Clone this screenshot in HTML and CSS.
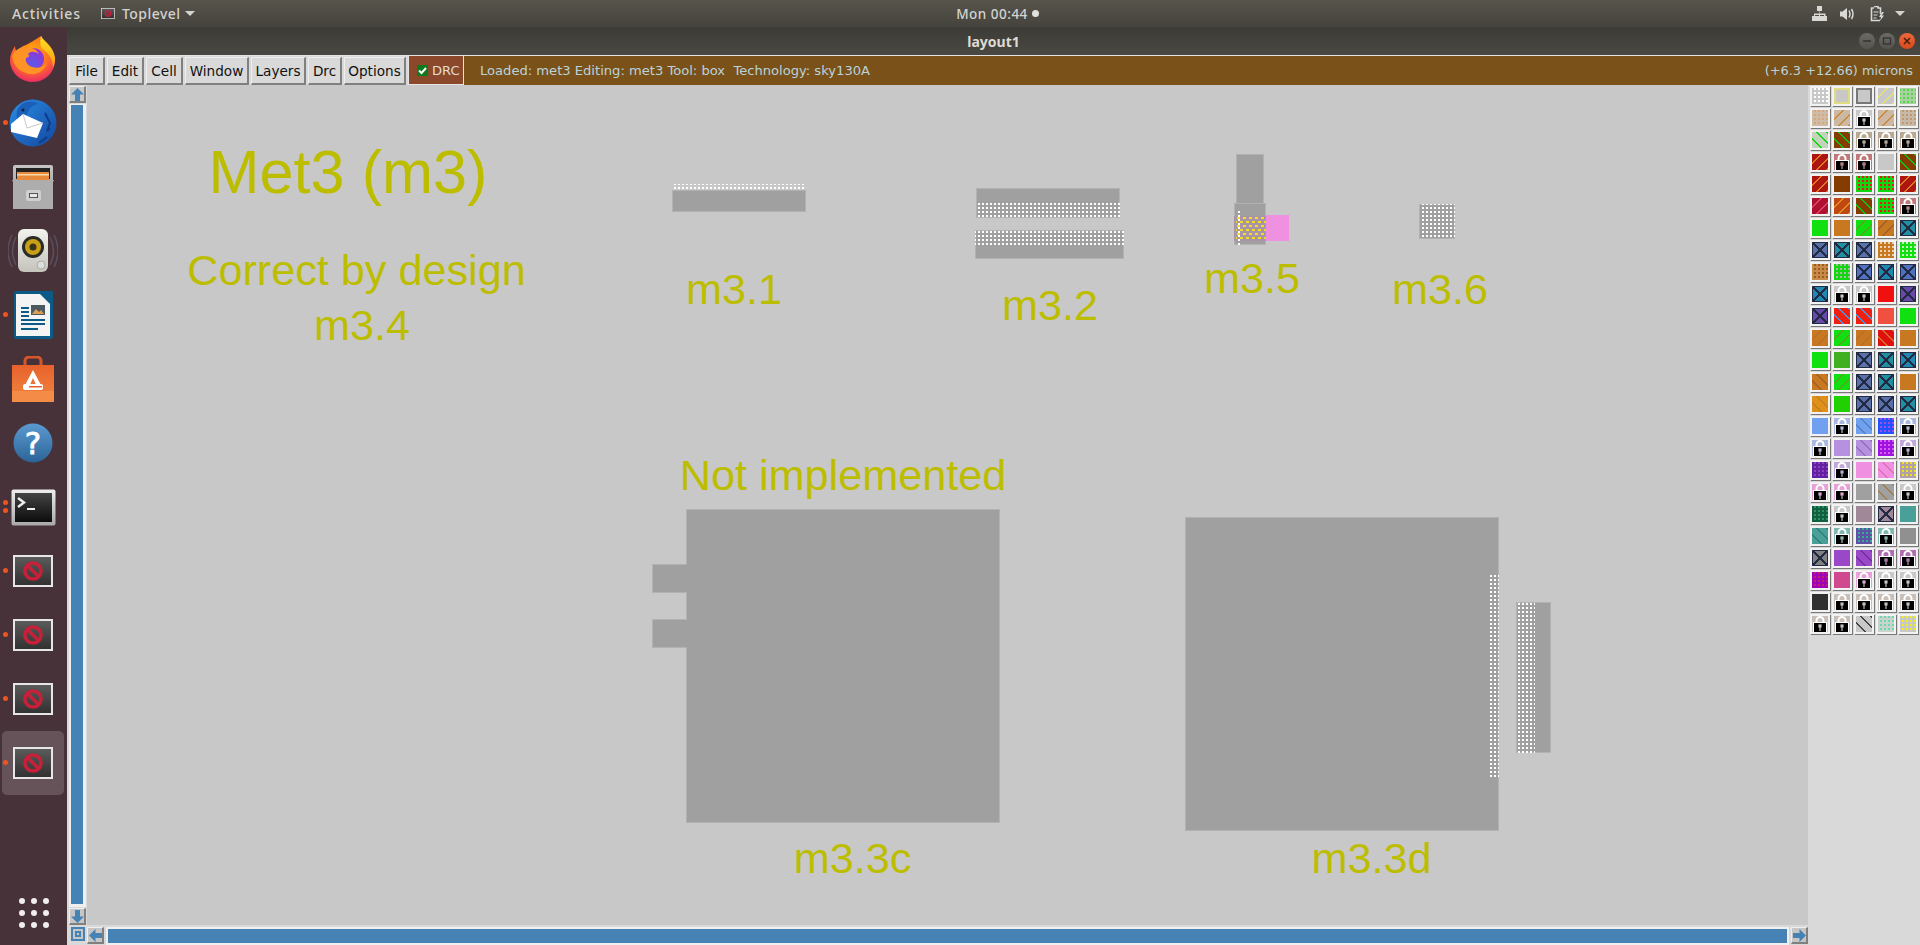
FILE: index.html
```html
<!DOCTYPE html>
<html lang="en">
<head>
<meta charset="utf-8">
<title>layout1</title>
<link rel="stylesheet" href="styles.css">
</head>
<body>
<svg class="defs" width="0" height="0" aria-hidden="true">
  <defs>
    <linearGradient id="noBg" x1="0" y1="0" x2="0" y2="1"><stop offset="0" stop-color="#5c5c5c"/><stop offset="1" stop-color="#303030"/></linearGradient>
    <radialGradient id="ffBody" cx=".5" cy=".35" r=".75"><stop offset="0" stop-color="#ffb000"/><stop offset=".55" stop-color="#ff6a2a"/><stop offset="1" stop-color="#e3127f"/></radialGradient>
    <linearGradient id="ffFlame" x1="0" y1="0" x2="0" y2="1"><stop offset="0" stop-color="#ffe226"/><stop offset="1" stop-color="#ff9a10"/></linearGradient>
    <radialGradient id="ffGlobe" cx=".5" cy=".7" r=".7"><stop offset="0" stop-color="#5a5ae6"/><stop offset="1" stop-color="#a02ed8"/></radialGradient>
    <linearGradient id="tbBlue" x1="0" y1="0" x2="1" y2="1"><stop offset="0" stop-color="#2a8fe8"/><stop offset="1" stop-color="#14459c"/></linearGradient>
    <linearGradient id="cab" x1="0" y1="0" x2="0" y2="1"><stop offset="0" stop-color="#c4c4c4"/><stop offset="1" stop-color="#8e8e8e"/></linearGradient>
    <linearGradient id="spk" x1="0" y1="0" x2="0" y2="1"><stop offset="0" stop-color="#f2f2ee"/><stop offset="1" stop-color="#c4c4bc"/></linearGradient>
    <linearGradient id="bag" x1="0" y1="0" x2="0" y2="1"><stop offset="0" stop-color="#e8622c"/><stop offset="1" stop-color="#f08540"/></linearGradient>
    <linearGradient id="hlp" x1="0" y1="0" x2="0" y2="1"><stop offset="0" stop-color="#5a9ad0"/><stop offset="1" stop-color="#2c6498"/></linearGradient>
    <linearGradient id="term" x1="0" y1="0" x2="0" y2="1"><stop offset="0" stop-color="#444"/><stop offset="1" stop-color="#0c0c0c"/></linearGradient>
    <linearGradient id="termFrame" x1="0" y1="0" x2="0" y2="1"><stop offset="0" stop-color="#eee"/><stop offset="1" stop-color="#a8a8a8"/></linearGradient>
    <symbol id="noWin" viewBox="0 0 40 32">
      <rect x="1" y="1" width="38" height="30" fill="url(#noBg)" stroke="#e6e6e6" stroke-width="2"/>
      <circle cx="20" cy="16" r="8" fill="none" stroke="#c8203a" stroke-width="3.600"/>
      <path d="M14.500 10.500l11 11" stroke="#c8203a" stroke-width="3.400"/>
    </symbol>
    <symbol id="arrow" viewBox="0 0 13 13">
      <path d="M6.500 0L13 6.500H9V13H4V6.500H0z" fill="#4682b4"/>
    </symbol>
  </defs>
</svg>

<header class="topbar">
  <div class="top-left">
    <span class="top-item activities">Activities</span>
    <span class="top-item app">
      <svg class="app-ico" width="14" height="11"><use href="#noWin"/></svg>
      Toplevel
      <span class="caret"></span>
    </span>
  </div>
  <div class="clock">Mon 00:44<span class="clock-dot"></span></div>
  <div class="tray">
    <svg width="15" height="15" viewBox="0 0 15 15"><path d="M5 0h5v5H8v2.500h5.500V10H15v5h-5v-5h2V9H8v1h2v5H5v-5h2V9H3v1h2v5H0v-5h2V7.500h5.500V5H5z" fill="#d8d8d4"/></svg>
    <svg class="tray-vol" width="15" height="14" viewBox="0 0 15 14"><path d="M0 4.500h2.500L7 1v12L2.500 9.500H0z" fill="#d8d8d4"/><path d="M9 3.500q2 3.500 0 7M11.500 2q3 5 0 10" fill="none" stroke="#d8d8d4" stroke-width="1.500"/></svg>
    <svg class="tray-bat" width="15" height="16" viewBox="0 0 15 16"><path d="M4 .5h4V2h2.500v6M10 14.500H1.500V2H4" fill="none" stroke="#d8d8d4" stroke-width="1.600"/><path d="M3.500 6h5M3.500 9h4M3.500 12h3" stroke="#d8d8d4" stroke-width="1.200"/><path d="M12 6l-3 5h2l-1 4 4-5.500h-2.200L14 6z" fill="#d8d8d4"/></svg>
    <span class="caret"></span>
  </div>
</header>

<div class="desktop">
  <nav class="dock">
    <div class="dock-item">
      <svg width="46" height="48" viewBox="0 0 46 48">
        <path d="M31 1c3 6 12 9 14 22 1 13-9 24-22 24C10 47 0 37 0 25c0-5 2-9 5-14 0 3 1 5 2 6 2-4 5-6 9-7 4-2 9-5 15-9z" fill="url(#ffBody)"/>
        <path d="M31 1c3 6 12 9 14 22 0 4-1 7-2 10 0-9-5-16-12-20-1-4-1-8 0-12z" fill="url(#ffFlame)"/>
        <circle cx="23" cy="24" r="11" fill="url(#ffGlobe)"/>
        <path d="M2 21c3-6 8-9 14-9 7 0 11 3 13 7-4-3-9-3-11 0 2 2 1 3-2 4-1 3 1 7 6 9 6 2 12 0 15-4-2 7-9 12-17 11C11 38 3 31 2 21z" fill="#ff9326"/>
      </svg>
    </div>
    <div class="dock-item running">
      <svg width="48" height="48" viewBox="0 0 48 48">
        <circle cx="24" cy="24" r="23.500" fill="url(#tbBlue)"/>
        <path d="M10 8c5-6 14-7 19-3-6 1-10 6-11 11l-9 6C7 17 7 12 10 8z" fill="#1c5fb8"/>
        <circle cx="14" cy="11" r="1.500" fill="#0b2040"/>
        <path d="M2 25L14 15l20 9-6 15-26-6z" fill="#fff"/>
        <path d="M14 15l4 14 16-5" fill="none" stroke="#c8c8d0" stroke-width="1"/>
        <path d="M36 14l5 10-3 8 3-3M30 44l8-6" stroke="#0e3c8a" stroke-width="2" fill="none"/>
      </svg>
    </div>
    <div class="dock-item">
      <svg width="42" height="44" viewBox="0 0 42 44">
        <rect x="1" y="0" width="40" height="44" rx="2" fill="url(#cab)"/>
        <rect x="4" y="3" width="34" height="11" fill="#222"/>
        <rect x="5" y="7" width="32" height="8" fill="#e88a3c"/>
        <rect x="5" y="9" width="32" height="1.500" fill="#f8d8a8"/>
        <path d="M0 15h42l-1 2v27H1V17z" fill="#adadad"/>
        <rect x="14" y="25" width="15" height="11" rx="2" fill="#cfcfcf"/>
        <rect x="17" y="28" width="9" height="5" fill="#555"/>
        <rect x="18" y="29" width="7" height="3" fill="#e8e8e8"/>
      </svg>
    </div>
    <div class="dock-item">
      <svg width="50" height="44" viewBox="0 0 50 44">
        <g fill="none" stroke="#7f8aa0" stroke-opacity=".35" stroke-width="1.500">
          <path d="M8 8q-7 14 0 28M42 8q7 14 0 28"/><path d="M4 6q-8 16 0 32M46 6q8 16 0 32"/>
        </g>
        <rect x="10" y="0" width="30" height="43" rx="6" fill="url(#spk)"/>
        <circle cx="25" cy="18" r="11" fill="#2a2a26"/>
        <circle cx="25" cy="18" r="8" fill="#c8a018"/>
        <circle cx="25" cy="18" r="3.500" fill="#3a3418"/>
        <circle cx="33" cy="36" r="4" fill="#ddd" stroke="#aaa"/>
      </svg>
    </div>
    <div class="dock-item running">
      <svg width="40" height="48" viewBox="0 0 40 48">
        <path d="M1 2a2 2 0 0 1 2-2h26l11 11v35a2 2 0 0 1-2 2H3a2 2 0 0 1-2-2z" fill="#0c5a86"/>
        <path d="M3 3h24l10 10v32H3z" fill="#f4f4f4"/>
        <path d="M28 0h12v12z" fill="#0c5a86"/>
        <path d="M8 17h8M8 21h8M8 25h8M8 29h24M8 33h24M8 38h17" stroke="#0c5a86" stroke-width="1.800"/>
        <rect x="18" y="14" width="14" height="10" fill="#4a5a60"/>
        <path d="M19 23l4-5 3 3 2-2 3 4z" fill="#d8a050"/>
      </svg>
    </div>
    <div class="dock-item">
      <svg width="42" height="46" viewBox="0 0 42 46">
        <path d="M13 11V5a4 4 0 0 1 4-4h8a4 4 0 0 1 4 4v6" fill="none" stroke="#d8552a" stroke-width="3"/>
        <rect x="0" y="9" width="42" height="37" fill="url(#bag)"/>
        <rect x="0" y="35" width="42" height="11" fill="#f48c48"/>
        <path d="M21 14l9 17h-5l-4-9-4 9h-5z" fill="#fff"/>
        <rect x="11" y="28" width="20" height="6" rx="2" fill="#fff"/>
        <rect x="17" y="30" width="13" height="1.500" fill="#e8622c"/>
      </svg>
    </div>
    <div class="dock-item">
      <svg width="40" height="40" viewBox="0 0 40 40">
        <circle cx="20" cy="20" r="19.500" fill="url(#hlp)"/>
        <text x="20" y="31" class="help-mark">?</text>
      </svg>
    </div>
    <div class="dock-item running-two">
      <svg width="45" height="37" viewBox="0 0 45 37">
        <rect x=".5" y=".5" width="44" height="36" rx="2" fill="url(#termFrame)"/>
        <rect x="4" y="4" width="37" height="29" fill="url(#term)"/>
        <path d="M7 9l6 4.500-6 4.500" fill="none" stroke="#eee" stroke-width="2.400"/>
        <path d="M16 20h8" stroke="#eee" stroke-width="2"/>
      </svg>
    </div>
    <div class="dock-item running"><svg width="40" height="32"><use href="#noWin"/></svg></div>
    <div class="dock-item running"><svg width="40" height="32"><use href="#noWin"/></svg></div>
    <div class="dock-item running"><svg width="40" height="32"><use href="#noWin"/></svg></div>
    <div class="dock-item running active"><svg width="40" height="32"><use href="#noWin"/></svg></div>
    <div class="apps-grid">
      <span></span><span></span><span></span>
      <span></span><span></span><span></span>
      <span></span><span></span><span></span>
    </div>
  </nav>

  <main class="window">
    <div class="titlebar">
      <span class="title">layout1</span>
      <div class="win-buttons">
        <span class="wb"><svg width="10" height="10" viewBox="0 0 10 10"><path d="M1 5h8" stroke="#333" stroke-width="1.500"/></svg></span>
        <span class="wb"><svg width="10" height="10" viewBox="0 0 10 10"><rect x="1.500" y="2" width="7" height="6" fill="none" stroke="#333" stroke-width="1.300"/></svg></span>
        <span class="wb wb-close"><svg width="10" height="10" viewBox="0 0 10 10"><path d="M2 2l6 6M8 2l-6 6" stroke="#40200f" stroke-width="1.500"/></svg></span>
      </div>
    </div>

    <div class="menubar">
      <button class="menu mb-file">File</button>
      <button class="menu mb-edit">Edit</button>
      <button class="menu mb-cell">Cell</button>
      <button class="menu mb-window">Window</button>
      <button class="menu mb-layers">Layers</button>
      <button class="menu mb-drc">Drc</button>
      <button class="menu mb-options">Options</button>
      <div class="drc-toggle">
        <svg width="11" height="11" viewBox="0 0 11 11"><rect width="11" height="11" fill="#0f7a1c"/><path d="M2 5.500l2.500 2.500L9 3" fill="none" stroke="#fff" stroke-width="2"/></svg>
        DRC
      </div>
      <div class="status">
        <span class="status-left">Loaded: met3 Editing: met3 Tool: box&nbsp; Technology: sky130A</span>
        <span>(+6.3 +12.66) microns</span>
      </div>
    </div>

    <div class="workarea">
      <div class="vbar">
        <div class="sb-btn"><svg width="13" height="13"><use href="#arrow"/></svg></div>
        <div class="v-thumb"></div>
        <div class="sb-btn"><svg class="rot180" width="13" height="13"><use href="#arrow"/></svg></div>
      </div>

      <div class="canvas">
        <svg width="1721" height="840" viewBox="87 85 1721 840">
          <defs>
            <pattern id="cut" x="2" y="3" width="4" height="4" patternUnits="userSpaceOnUse"><rect width="2" height="2" fill="#fff"/></pattern>
            <pattern id="via" x="1" y="1" width="6" height="8" patternUnits="userSpaceOnUse"><rect width="3" height="2" fill="#f0e020"/><rect x="3" y="4" width="3" height="2" fill="#f0e020"/></pattern>
          </defs>

          <text class="lbl lbl-big" x="348" y="192.500">Met3 (m3)</text>
          <text class="lbl" x="356.500" y="285">Correct by design</text>
          <text class="lbl" x="362" y="340">m3.4</text>
          <text class="lbl" x="734" y="303.500">m3.1</text>
          <text class="lbl" x="1050" y="320">m3.2</text>
          <text class="lbl" x="1252" y="292.500">m3.5</text>
          <text class="lbl" x="1440" y="304">m3.6</text>
          <text class="lbl" x="843" y="489.500">Not implemented</text>
          <text class="lbl" x="852.500" y="873">m3.3c</text>
          <text class="lbl" x="1371.500" y="873">m3.3d</text>

          <g class="crisp">
            <rect class="geo" x="672.500" y="190.500" width="133" height="21"/>
            <rect class="cut" x="674" y="184" width="130" height="6"/>

            <rect class="geo" x="976.500" y="188.500" width="143" height="29"/>
            <rect class="cut" x="978" y="203" width="142" height="15"/>
            <rect class="geo" x="975.500" y="230.500" width="148" height="28"/>
            <rect class="cut" x="975" y="230" width="149" height="15"/>

            <rect class="pink" x="1234" y="215" width="55" height="26"/>
            <rect class="geo" x="1236.500" y="154.500" width="27" height="50"/>
            <rect class="geo" x="1234.500" y="203.500" width="31" height="41"/>
            <rect class="overlap" x="1234" y="216" width="32" height="25"/>
            <rect class="via" x="1236" y="217" width="30" height="24"/>
            <rect class="cut" x="1238" y="211" width="2" height="34"/>

            <rect class="geo" x="1419.500" y="204.500" width="35" height="34"/>
            <rect class="cut" x="1420" y="204" width="35" height="35"/>

            <path class="geo" d="M686.500 509.500H999.500V822.500H686.500V647.500H652.500V619.500H686.500V592.500H652.500V564.500H686.500Z"/>

            <rect class="geo" x="1185.500" y="517.500" width="313" height="313"/>
            <rect class="cut" x="1490" y="575" width="9" height="204"/>
            <rect class="geo" x="1516.500" y="602.500" width="34" height="150"/>
            <rect class="cut" x="1517" y="603" width="18" height="150"/>
          </g>
        </svg>
      </div>

      <aside class="layers">
        <span class="t d c01"></span><span class="t ybox"></span><span class="t dbox"></span><span class="t fw c02"></span><span class="t d c03"></span>
        <span class="t d c04"></span><span class="t fw c05"></span><span class="t lk c06"></span><span class="t fw c05"></span><span class="t d c07"></span>
        <span class="t bk c08"></span><span class="t bk c09"></span><span class="t lk c10"></span><span class="t lk c10"></span><span class="t lk c10"></span>
        <span class="t fw c11"></span><span class="t lk c12"></span><span class="t lk c12"></span><span class="t c13"></span><span class="t bk c09"></span>
        <span class="t fw c11"></span><span class="t c14"></span><span class="t d c15"></span><span class="t d c15"></span><span class="t fw c11"></span>
        <span class="t fw c16"></span><span class="t fw c17"></span><span class="t bk c09"></span><span class="t d c15"></span><span class="t lk c12"></span>
        <span class="t c18"></span><span class="t c19"></span><span class="t fw c20"></span><span class="t fw c21"></span><span class="t x c22"></span>
        <span class="t x c23"></span><span class="t x c22"></span><span class="t x c23"></span><span class="t d c24"></span><span class="t d c25"></span>
        <span class="t d c26"></span><span class="t d c27"></span><span class="t x c28"></span><span class="t x c29"></span><span class="t x c28"></span>
        <span class="t x c29"></span><span class="t lk c13"></span><span class="t lk c13"></span><span class="t c30"></span><span class="t x c31"></span>
        <span class="t x c31"></span><span class="t bk c32"></span><span class="t bk c32"></span><span class="t c33"></span><span class="t c18"></span>
        <span class="t fw c34"></span><span class="t fw c20"></span><span class="t fw c34"></span><span class="t bk c35"></span><span class="t c19"></span>
        <span class="t c18"></span><span class="t c36"></span><span class="t x c23"></span><span class="t x c22"></span><span class="t x c29"></span>
        <span class="t bk c21"></span><span class="t fw c20"></span><span class="t x c23"></span><span class="t x c22"></span><span class="t c19"></span>
        <span class="t bk c37"></span><span class="t c38"></span><span class="t x c23"></span><span class="t x c23"></span><span class="t x c22"></span>
        <span class="t c39"></span><span class="t lk c40"></span><span class="t bk c41"></span><span class="t d c42"></span><span class="t lk c40"></span>
        <span class="t lk c40"></span><span class="t c43"></span><span class="t bk c44"></span><span class="t d c45"></span><span class="t lk c46"></span>
        <span class="t d c47"></span><span class="t lk c46"></span><span class="t c48"></span><span class="t bk c49"></span><span class="t d c50"></span>
        <span class="t lk c51"></span><span class="t lk c51"></span><span class="t c52"></span><span class="t bk c53"></span><span class="t lk c13"></span>
        <span class="t d c54"></span><span class="t lk c13"></span><span class="t c55"></span><span class="t x c56"></span><span class="t c57"></span>
        <span class="t bk c58"></span><span class="t lk c59"></span><span class="t d c60"></span><span class="t lk c59"></span><span class="t c61"></span>
        <span class="t x c62"></span><span class="t c63"></span><span class="t bk c64"></span><span class="t lk c65"></span><span class="t lk c65"></span>
        <span class="t d c66"></span><span class="t c67"></span><span class="t lk c51"></span><span class="t lk c13"></span><span class="t lk c13"></span>
        <span class="t c68"></span><span class="t lk c69"></span><span class="t lk c69"></span><span class="t lk c69"></span><span class="t lk c69"></span>
        <span class="t lk c69"></span><span class="t lk c69"></span><span class="t bk c70"></span><span class="t d c71"></span><span class="t d c72"></span>
      </aside>

      <div class="corner">
        <svg width="14" height="14" viewBox="0 0 14 14" shape-rendering="crispEdges">
          <rect width="14" height="14" fill="#4682b4"/>
          <rect x="2" y="2" width="10" height="10" fill="#c6c6c6"/>
          <rect x="4" y="4" width="6" height="6" fill="#4682b4"/>
          <rect x="6" y="6" width="2" height="2" fill="#c6c6c6"/>
        </svg>
      </div>

      <div class="hbar">
        <div class="sb-btn"><svg class="rot270" width="13" height="13"><use href="#arrow"/></svg></div>
        <div class="h-thumb"></div>
        <div class="sb-btn"><svg class="rot90" width="13" height="13"><use href="#arrow"/></svg></div>
      </div>
    </div>
  </main>
</div>
</body>
</html>
```

FILE: styles.css
```css
* { box-sizing: border-box; }

html, body {
  margin: 0;
  width: 1920px;
  height: 945px;
  overflow: hidden;
}

body {
  display: flex;
  flex-direction: column;
  font-family: "DejaVu Sans", sans-serif;
  background: #d9d9d9;
}

.defs { position: absolute; }

/* GNOME top bar */
.topbar {
  height: 27px;
  flex: none;
  display: grid;
  grid-template-columns: 1fr auto 1fr;
  align-items: center;
  padding: 0 15px 0 12px;
  background: linear-gradient(#57544c, #45433d);
  color: #d3d3cf;
  font-family: "Noto Sans", sans-serif;
  font-size: 14px;
  font-weight: 500;
}
.top-left { display: flex; align-items: center; }
.top-item { display: flex; align-items: center; letter-spacing: .45px; }
.activities { width: 89px; letter-spacing: .85px; }
.app-ico { margin-right: 7px; }
.caret {
  width: 0;
  height: 0;
  margin-left: 5px;
  border-left: 5px solid transparent;
  border-right: 5px solid transparent;
  border-top: 5px solid #d3d3cf;
}
.clock { display: flex; align-items: center; font-size: 13.500px; letter-spacing: .5px; transform: translateX(39px); }
.clock-dot {
  width: 7px;
  height: 7px;
  margin-left: 4px;
  border-radius: 50%;
  background: #e0e0dc;
}
.tray { display: flex; align-items: center; justify-content: flex-end; }
.tray-vol { margin-left: 13px; }
.tray-bat { margin-left: 15px; }
.tray .caret { margin-left: 10px; }

.desktop { flex: 1; display: flex; min-height: 0; }

/* Dock */
.dock {
  width: 67px;
  flex: none;
  display: flex;
  flex-direction: column;
  background: #47323a;
}
.dock-item {
  position: relative;
  height: 64px;
  flex: none;
  margin: 0 3px 0 2px;
  display: flex;
  align-items: center;
  justify-content: center;
  border-radius: 5px;
}
.dock-item.active { background: #655359; }
.running::before,
.running-two::before,
.running-two::after {
  content: "";
  position: absolute;
  left: 1px;
  top: 29px;
  width: 5px;
  height: 5px;
  border-radius: 50%;
  background: #f0541e;
}
.running-two::before { top: 25px; }
.running-two::after { top: 33px; }
.help-mark {
  font-family: "DejaVu Sans", sans-serif;
  font-size: 31px;
  font-weight: 400;
  stroke: #fff;
  stroke-width: .8px;
  fill: #fff;
  text-anchor: middle;
}
.apps-grid {
  margin: auto 0 17px 19px;
  display: grid;
  grid-template-columns: repeat(3, 6px);
  gap: 6px;
}
.apps-grid span { height: 6px; border-radius: 50%; background: #f0eeee; }

/* Window */
.window { flex: 1; display: flex; flex-direction: column; min-width: 0; }
.titlebar {
  position: relative;
  height: 28px;
  flex: none;
  display: flex;
  align-items: center;
  justify-content: center;
  background: linear-gradient(#3d3b36, #4a4842);
  color: #dfdbd2;
  font-family: "Noto Sans", sans-serif;
  font-size: 14px;
  font-weight: 700;
}
.title { transform: translateX(0); }
.win-buttons { position: absolute; right: 5px; top: 6px; display: flex; gap: 4px; }
.wb {
  width: 16px;
  height: 16px;
  display: flex;
  align-items: center;
  justify-content: center;
  border-radius: 50%;
  background: linear-gradient(#6d6b66, #55534e);
}
.wb-close { background: linear-gradient(#f0693a, #d8481c); }

.menubar {
  height: 30px;
  flex: none;
  display: flex;
  align-items: stretch;
  padding: 1px 0 0 2px;
  border-top: 1px solid #e4e4e4;
  background: #d9d9d9;
  font-size: 13.600px;
}
.menu {
  height: 28px;
  margin-right: 2px;
  padding: 0;
  border: 1px solid #eee;
  border-right: 2px solid #808080;
  border-bottom: 2px solid #808080;
  background: #d9d9d9;
  color: #111;
  font: inherit;
}
.mb-file { width: 36px; }
.mb-edit { width: 37px; }
.mb-cell { width: 37px; }
.mb-window { width: 64px; }
.mb-layers { width: 55px; }
.mb-drc { width: 34px; }
.mb-options { width: 62px; }
.drc-toggle {
  width: 56px;
  margin-top: -1px;
  display: flex;
  align-items: center;
  gap: 4px;
  padding-left: 8px;
  border: 1px solid #e4e4e4;
  border-top: 0;
  background: #8c482a;
  color: #e2dcd4;
  font-size: 13px;
  white-space: nowrap;
}
.status {
  flex: 1;
  margin-top: -1px;
  display: flex;
  align-items: center;
  justify-content: space-between;
  padding: 0 7px 0 16px;
  background: #7a5119;
  color: #b9d3dc;
  font-size: 12.900px;
}
.status-left { font-size: 13.100px; }

.workarea {
  flex: 1;
  min-height: 0;
  display: grid;
  grid-template-columns: 20px 1721px 112px;
  grid-template-rows: 840px 20px;
}

/* Tk scrollbars */
.vbar {
  display: flex;
  flex-direction: column;
  padding: 1px 1px 0 2px;
  gap: 1px;
}
.sb-btn {
  width: 17px;
  height: 17px;
  flex: none;
  display: flex;
  align-items: center;
  justify-content: center;
  border: 1px solid #eee;
  border-right: 2px solid #808080;
  border-bottom: 2px solid #808080;
  background: #c6c6c6;
}
.v-thumb {
  flex: 1;
  border: 3px solid #efefef;
  border-left-width: 2px;
  border-top-width: 1px;
  background: #4682b4;
}
.hbar {
  display: flex;
  align-items: flex-start;
  padding-top: 2px;
}
.h-thumb {
  flex: 1;
  height: 18px;
  margin: 0 2px;
  border: 2px solid #efefef;
  background: #4682b4;
}
.corner { padding: 2px 0 0 4px; }
.corner svg { display: block; }
.rot90 { transform: rotate(90deg); }
.rot180 { transform: rotate(180deg); }
.rot270 { transform: rotate(270deg); }

/* Layout canvas */
.canvas { background: #c8c8c8; overflow: hidden; }
.canvas svg { display: block; }
.lbl {
  font-family: "Liberation Sans", sans-serif;
  font-size: 43.200px;
  fill: #bdbd00;
  text-anchor: middle;
}
.lbl-big { font-size: 61.200px; }
.crisp { shape-rendering: crispEdges; }
.geo { fill: #a0a0a0; stroke: #b2b2b2; stroke-width: 1; }
.cut { fill: url(#cut); }
.via { fill: url(#via); }
.pink { fill: #f090e0; }
.overlap { fill: #aa94a8; }

/* Layer palette */
.layers {
  grid-row: 1 / span 2;
  grid-column: 3;
  display: grid;
  grid-template-columns: repeat(5, 20px);
  grid-auto-rows: 20px;
  align-content: start;
  gap: 2px;
  padding: 1px 0 0 2px;
  background: #d9d9d9;
}
.t {
  position: relative;
  --a: #c8c8c8;
  --b: #fff;
  border: 2px solid #f2f2f2;
  box-shadow: 1px 1px 0 #777;
  background-color: var(--a);
}
.d { background-image: conic-gradient(var(--b) 25%, transparent 0); background-size: 4px 4px; }
.fw { background-image: repeating-linear-gradient(135deg, var(--a) 0 6px, var(--b) 6px 7.500px); }
.bk { background-image: repeating-linear-gradient(45deg, var(--a) 0 6px, var(--b) 6px 7.500px); }
.x {
  background-image:
    linear-gradient(45deg, transparent 46%, #232a44 46% 54%, transparent 54%),
    linear-gradient(-45deg, transparent 46%, #232a44 46% 54%, transparent 54%);
  box-shadow: 1px 1px 0 #777, inset 0 0 0 1px #232a44;
}
.ybox { box-shadow: 1px 1px 0 #777, inset 0 0 0 2px #e0dc80; }
.dbox { box-shadow: 1px 1px 0 #777, inset 0 0 0 2px #777; }
.lk::after {
  content: "";
  position: absolute;
  inset: 0;
  background: url("data:image/svg+xml,<svg xmlns='http://www.w3.org/2000/svg' viewBox='0 0 16 16'><path fill='white' fill-rule='evenodd' d='M3.500 6V4.500a4.500 4.500 0 0 1 9 0V6H15v10H1V6zM5.500 6h5V4.500a2.500 2.500 0 0 0-5 0zM6.500 8.500h3v3h-1V15h-1v-3.500h-1z'/><path fill='black' fill-rule='evenodd' d='M2 7h12v9H2zM6.500 8.500v3h1V15h1v-3.500h1v-3z'/></svg>") center / 16px 16px no-repeat;
}

.c01 { --a: #c8c8c8; --b: #fff; }
.c02 { --a: #c8c8c8; --b: #e6e070; }
.c03 { --a: #aad0a0; --b: #50d850; background-position: 1px 1px; }
.c04 { --a: #cfbca8; --b: #d8a878; }
.c05 { --a: #cdb9a3; --b: #c98a3c; }
.c06 { --a: #c8c8c8; --b: #c8c8c8; }
.c07 { --a: #c8b8a8; --b: #c09870; }
.c08 { --a: #c4d4bc; --b: #10d810; }
.c09 { --a: #843c00; --b: #10c410; }
.c10 { --a: #b8a890; }
.c11 { --a: #ae1410; --b: #d87c20; }
.c12 { --a: #c07878; }
.c13 { --a: #c8c8c8; }
.c14 { --a: #843c00; }
.c15 { --a: #10d810; --b: #e81818; }
.c16 { --a: #b01030; --b: #d8486a; }
.c17 { --a: #c04810; --b: #e09020; }
.c18 { --a: #10e010; }
.c19 { --a: #c87820; }
.c20 { --a: #10e010; --b: #58a420; }
.c21 { --a: #c87820; --b: #a0602c; }
.c22 { --a: #2090a0; }
.c23 { --a: #5a70a8; }
.c24 { --a: #c87820; --b: #e8d4b0; }
.c25 { --a: #10e010; --b: #c4f0c0; }
.c26 { --a: #c88a48; --b: #9a5a20; }
.c27 { --a: #10d810; --b: #b0b8a8; }
.c28 { --a: #5070c0; }
.c29 { --a: #2088b0; }
.c30 { --a: #f01010; }
.c31 { --a: #6848a8; }
.c32 { --a: #f02010; --b: #5090e0; }
.c33 { --a: #f05040; }
.c34 { --a: #c87820; --b: #b87028; }
.c35 { --a: #e01010; --b: #d87020; }
.c36 { --a: #40b020; }
.c37 { --a: #e09018; --b: #c08028; }
.c38 { --a: #20d000; }
.c39 { --a: #70a0f0; }
.c40 { --a: #a8b8e0; }
.c41 { --a: #70a0f0; --b: #5880c0; }
.c42 { --a: #2050ff; --b: #a050e0; }
.c43 { --a: #b890e0; }
.c44 { --a: #b890e0; --b: #9070c0; }
.c45 { --a: #a010e0; --b: #d060f0; }
.c46 { --a: #c0a8d8; }
.c47 { --a: #6020a0; --b: #9040c0; }
.c48 { --a: #f090e0; }
.c49 { --a: #f090e0; --b: #e070b8; }
.c50 { --a: #b0a0a8; --b: #f0e020; }
.c51 { --a: #e8a0d8; }
.c52 { --a: #a0a0a0; }
.c53 { --a: #a0a0a0; --b: #a08050; }
.c54 { --a: #106040; --b: #309068; }
.c55 { --a: #a08898; }
.c56 { --a: #a08898; }
.c57 { --a: #48a098; }
.c58 { --a: #48a098; --b: #308078; }
.c59 { --a: #80b8b0; }
.c60 { --a: #6050a8; --b: #30b090; }
.c61 { --a: #909090; }
.c62 { --a: #808080; }
.c63 { --a: #9a48c8; }
.c64 { --a: #9a48c8; --b: #7030a0; }
.c65 { --a: #b070b0; }
.c66 { --a: #a000b8; --b: #c02070; }
.c67 { --a: #d04890; }
.c68 { --a: #303030; }
.c69 { --a: #c8c0b8; }
.c70 { --a: #c8c8c8; --b: #444; }
.c71 { --a: #c8d4cc; --b: #70d8b0; }
.c72 { --a: #c8c8c8; --b: #f0f020; }
```
